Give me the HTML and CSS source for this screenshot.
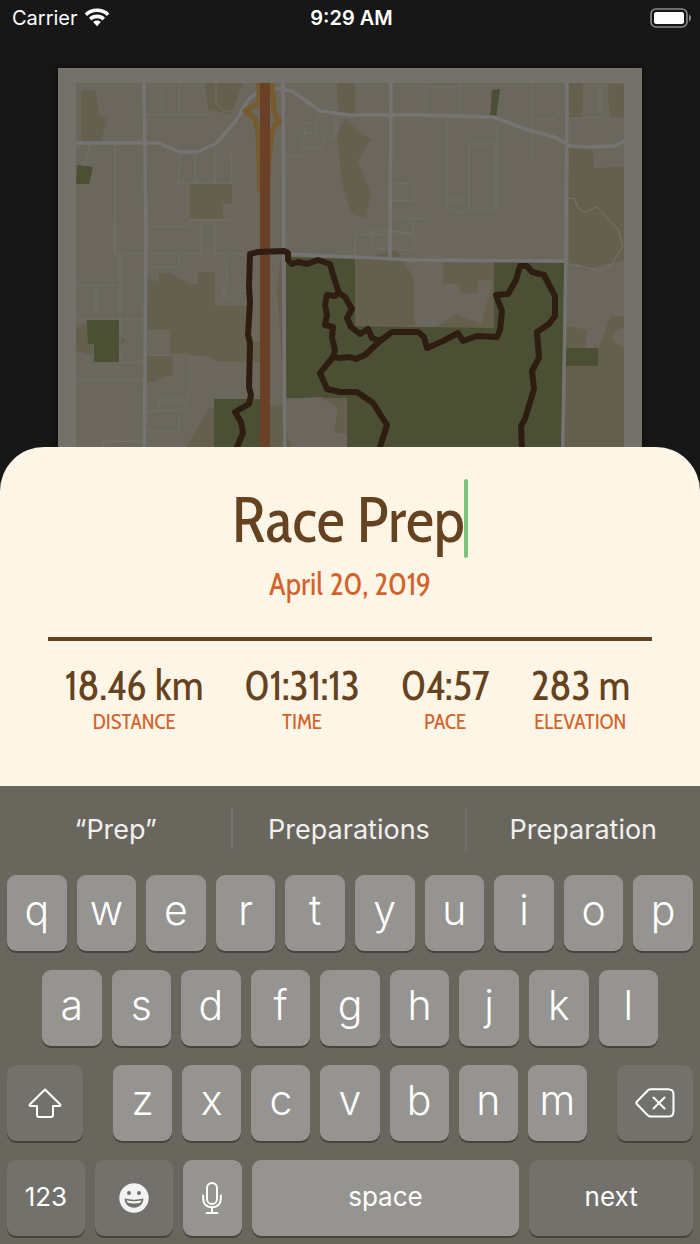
FILE: index.html
```html
<!DOCTYPE html>
<html lang="en">
<head>
  <meta charset="UTF-8" />
  <meta name="viewport" content="width=device-width, initial-scale=1.0" />
  <title>Race Prep</title>
  <link rel="stylesheet" href="styles.css">
</head>
<body>

  <header class="status-bar">
    <div class="carrier">
      <span>Carrier</span>
      <svg width="26" height="19" viewBox="0 0 26 19" aria-label="Wi-Fi">
        <path d="M13 0.400c4.800 0 9.200 1.800 12.400 5l-2.500 2.600C20.300 5.500 16.800 4.100 13 4.100S5.700 5.500 3.100 8L0.600 5.400C3.800 2.200 8.200 0.400 13 0.400z" fill="#fff"/>
        <path d="M13 6.600c3.100 0 5.900 1.200 8 3.200l-2.500 2.600c-1.500-1.400-3.400-2.200-5.500-2.200s-4 0.800-5.500 2.200L5 9.800c2.100-2 4.900-3.200 8-3.200z" fill="#fff"/>
        <path d="M13 12.600c1.500 0 2.800 0.500 3.800 1.500L13 18.200l-3.800-4.100c1-1 2.300-1.500 3.800-1.500z" fill="#fff"/>
      </svg>
    </div>
    <div class="time">9:29 AM</div>
    <div class="battery">
      <svg width="42" height="20" viewBox="0 0 42 20" aria-label="Battery full">
        <rect x="2" y="1" width="36" height="18" rx="5" fill="none" stroke="#8a8a8a" stroke-width="1.600"/>
        <rect x="5" y="4" width="30" height="12" rx="2.500" fill="#fff"/>
        <path d="M40 6.500c1.400 0.600 2 2 2 3.500s-0.600 2.900-2 3.500z" fill="#8a8a8a"/>
      </svg>
    </div>
  </header>

  <main>
    <div class="poster">
      <svg class="map" viewBox="76 83 548 408" role="img" aria-label="Route map">
        <rect x="76" y="83" width="548" height="408" fill="#6b675c"/>

        <!-- built-up areas -->
        <g fill="#655f4e">
          <path d="M81 91h15l3 24 9 2-7 24H81z"/>
          <path d="M205 83h38l-12 32-23-6z"/>
          <path d="M190 184h42v20h-9v15h-33z"/>
          <path d="M337 83h18v31h-17z"/>
          <path d="M344 119l7 5 20 16-13 20 13 35-5 23-15-4-9-32-5-47z"/>
          <path d="M569 83h14l-1 35h-13z"/>
          <path d="M609 84h15v33h-14l-2-20z"/>
          <path d="M569 148l24 2 1 18 30-1v93l-38 9-17-7z"/>
          <path d="M147 278l12 4v-9h12l17 11h10v-12h17v34h32v36h13v20h-40l-15-6h-35v-26h-23z"/>
          <path d="M147 356h26v20h-8l-11 6h-7z"/>
          <path d="M76 327l12-6 6 34-18-4zM119 335l8 6-8 5z"/>
          <path d="M186 447l22-37 8-5h70v86H176z"/>
          <path d="M281 258l-4 30 5 75 3 60-8 24h-1v44h60l-51-78z"/>
          <path d="M374 256l23-7 17 30v46l-59 1v-70z"/>
          <path d="M443 261h51v68h-60l21-15 26 10 12-43-15-1v13h-18v-9h-17z"/>
          <path d="M566 326l21 4-2 18 12 5 14-38 13 2v10l-11 6v9l11 5v144h-61z"/>
        </g>

        <!-- parks -->
        <g fill="#4b4f34">
          <path d="M77 165l16 2-4 17H76z"/>
          <path d="M492 90l8-1-4 29-6-1z"/>
          <path d="M87 320h32v42H94v-18h-6z"/>
          <path d="M214 399h49v92h-49z"/>
          <path d="M286 257l69 2v67l139 2v-66l70 1-3 228H347v-93H286z"/>
          <path d="M565 348h33v18h-33z"/>
        </g>
        <path d="M286 399l36-2 16 12-4 25 7 57h-35l-20-60z" fill="#6b675c"/>
        <path d="M322 398h25v36l-13-2 4-24z" fill="#655f4e"/>

        <!-- small streets -->
        <g fill="none" stroke="#72706a" stroke-width="1">
          <path d="M162 83v32M179 83v31M146 115l62-1M216 83v20l8 8h9M115 145v109M90 145l-6 20"/>
          <path d="M180 153l-2 30h54l-1-30-16 14M195 153v30M215 148v35M147 226h43v-6h42M201 220v33M215 220v33"/>
          <path d="M286 156h16v-20l3-3v-10h11v10h-11M302 148h20l4-12h10v-21M318 115v8"/>
          <path d="M426 87h35M426 83v31M461 83l-1 31M532 83v74M532 119h23l4-7h8M569 118h31V83"/>
          <path d="M447 119v91l8-1 5 4 9-4v-65h28v-20M469 209l27 1v-66M447 200h21"/>
          <path d="M392 183l22 1v17l-22-1M392 217l34 2M414 219l-1 15H355v22M372 230l42 3v17l-42-2z"/>
          <path d="M114 220v34h132M120 254v110M76 286l44-1M76 319h69M96 286v33M76 380h68M120 362h24"/>
          <path d="M147 267h32v-13M147 355h43v36l-5 18-38 3M159 411v-11h27M147 431h32v-19M103 447v-5l41-1M225 254l2 25-4 16 9 3 5-7h10"/>
          <path d="M567 198l8 1 3 9 7 4 12-5 21 22 5 17-12 19-12 6-22-6h-8" stroke="#77766c"/>
        </g>

        <!-- main roads -->
        <g fill="none" stroke="#757472" stroke-width="3.500" stroke-linejoin="round">
          <path d="M144 83l2 150-2 258M283 83l2 408M391 83l-1 175M567 83l-1 177-4 231"/>
          <path d="M76 143h82l22 9h17l18-8 20-22 14-23 13-10 12-1 18 3 28 20 30 4h68l75 2 29 11 35 10 13 8 18 1 27-1 11-6"/>
          <path d="M286 254l69 3 60 3 150 1"/>
        </g>

        <!-- highway with its ramps -->
        <g fill="none" stroke="#755b2d" stroke-width="5" stroke-linejoin="round">
          <path d="M259 83v20l-14 8 10 7 3 14 2 60M272 83l2 28 5 9-7 10-3 32-2 30M275 115l5 10"/>
        </g>
        <path d="M265 83v408" stroke="#6a4027" stroke-width="10"/>

        <!-- the run -->
        <g fill="none" stroke="#2e1e11" stroke-width="6" stroke-linejoin="round">
          <path d="M225 491l12-44 6-14-2-11-6-10 14-8 2-9-2-8 1-44-2-8 2-33-1-15 1-33 8-2 26-1 4 2v7l4 4 6-2 9 2 11-4 12 4 4 14 5 15 6 4 4 7 3 5-5 9 4 9 9 7 8-5 4 9 8 3 12-9h26l6 5 3 11 16-7 15-8 5 8 14-5 20 1 3-7 2-19-6-16 12-1 8-14 4-14h7l5 6 12 3 11 21v20l-6 8-12 8 2 26-7 13 2 18-9 30-4 7 1 22-2 44"/>
          <path d="M339 292l-4 4-8-1-2 10 2 10-2 10 8 2-1 11 3 12-2 7-13 16 7 16 13 3 17 0 16 11 14 22-7 22-9 44"/>
          <path d="M333 357l7 1 10-1 6 2 9-4 17-16"/>
        </g>
      </svg>
    </div>

    <section class="sheet">
      <div class="title-row">
        <input class="title" type="text" value="Race Prep" size="8" aria-label="Activity title">
        <span class="caret"></span>
      </div>
      <p class="date">April 20, 2019</p>
      <hr>
      <dl class="stats">
        <div><dd>18.46 km</dd><dt>DISTANCE</dt></div>
        <div><dd>01:31:13</dd><dt>TIME</dt></div>
        <div><dd>04:57</dd><dt>PACE</dt></div>
        <div><dd>283 m</dd><dt>ELEVATION</dt></div>
      </dl>
    </section>
  </main>

  <section class="keyboard" aria-label="Keyboard">
    <div class="suggestions">
      <button>“Prep”</button>
      <button>Preparations</button>
      <button>Preparation</button>
    </div>
    <div class="row">
      <button class="key">q</button>
      <button class="key">w</button>
      <button class="key">e</button>
      <button class="key">r</button>
      <button class="key">t</button>
      <button class="key">y</button>
      <button class="key">u</button>
      <button class="key">i</button>
      <button class="key">o</button>
      <button class="key">p</button>
    </div>
    <div class="row row-middle">
      <button class="key">a</button>
      <button class="key">s</button>
      <button class="key">d</button>
      <button class="key">f</button>
      <button class="key">g</button>
      <button class="key">h</button>
      <button class="key">j</button>
      <button class="key">k</button>
      <button class="key">l</button>
    </div>
    <div class="row">
      <button class="key dark shift" aria-label="Shift">
        <svg width="34" height="30" viewBox="0 0 34 30" fill="none" stroke="#fff" stroke-width="2" stroke-linejoin="round">
          <path d="M17 1.500L32 16.200c0.800 0.900 0.500 1.800-0.600 1.800H25v9c0 1.200-0.800 2-2 2H11c-1.200 0-2-0.800-2-2v-9H2.600c-1.100 0-1.400-0.900-0.600-1.800z"/>
        </svg>
      </button>
      <button class="key">z</button>
      <button class="key">x</button>
      <button class="key">c</button>
      <button class="key">v</button>
      <button class="key">b</button>
      <button class="key">n</button>
      <button class="key">m</button>
      <button class="key dark delete" aria-label="Delete">
        <svg width="40" height="30" viewBox="0 0 40 30" fill="none" stroke="#fff" stroke-width="2" stroke-linejoin="round" stroke-linecap="round">
          <path d="M15.500 1.200H33c3.300 0 5.500 2 5.500 5.200v17c0 3.200-2.200 5.200-5.500 5.200H15.500c-1 0-1.800-0.400-2.500-1L1.800 16c-0.700-0.700-0.700-1.500 0-2.200L13 2.200c0.700-0.600 1.500-1 2.500-1z"/>
          <path d="M18.500 9.500l11 11M29.500 9.500l-11 11"/>
        </svg>
      </button>
    </div>
    <div class="row row-bottom">
      <button class="key dark word">123</button>
      <button class="key dark" aria-label="Emoji">
        <svg width="30" height="30" viewBox="0 0 30 30">
          <circle cx="15" cy="15" r="14.700" fill="#f3f3f3"/>
          <circle cx="10" cy="10" r="2" fill="#73716b"/>
          <circle cx="20" cy="10" r="2" fill="#73716b"/>
          <path d="M5.500 15.500c6 1.500 13 1.500 19 0-0.300 5.700-4.300 9.200-9.500 9.200s-9.200-3.500-9.500-9.200z" fill="#73716b"/>
          <path d="M7.500 17.300c5 1.200 10 1.200 15 0l-1.200 2.500c-4.200 1-8.400 1-12.600 0z" fill="#f3f3f3"/>
        </svg>
      </button>
      <button class="key" aria-label="Dictate">
        <svg width="20" height="32" viewBox="0 0 20 32" fill="none" stroke="#fff" stroke-width="2" stroke-linecap="round">
          <rect x="5" y="1" width="10" height="21" rx="5"/>
          <path d="M1.200 13.500v3.500c0 5 3.500 8.300 8.800 8.300s8.800-3.300 8.800-8.300v-3.500M10 25.500V31M4.500 31h11"/>
        </svg>
      </button>
      <button class="key word">space</button>
      <button class="key dark word">next</button>
    </div>
  </section>

</body>
</html>
```
FILE: styles.css
```css
* {
  box-sizing: border-box;
}
body {
  margin: 0;
  background: #171717;
  font-family: Inter, "Liberation Sans", sans-serif;
  color: #fff;
}
button {
  border: none;
  padding: 0;
  background: none;
  color: inherit;
  font-family: inherit;
}

/* status bar */
.status-bar {
  display: grid;
  grid-template-columns: 1fr auto 1fr;
  align-items: center;
  height: 36px;
  padding: 0 9px 0 12px;
  font-size: 20px;
}
.carrier {
  display: flex;
  align-items: center;
  gap: 6px;
}
.carrier svg {
  margin-bottom: 2px;
}
.time {
  font-weight: 600;
}
.battery {
  display: flex;
  justify-content: flex-end;
}

/* map poster */
.poster {
  margin: 32px 58px 0;
  padding: 15px 18px 0;
  background: #74716a;
  box-shadow: 0 0 6px #0c0c0c;
}
.map {
  display: block;
  width: 100%;
  height: auto;
}

/* details sheet */
.sheet {
  position: relative;
  margin-top: -44px;
  padding: 32px 48px 50px;
  border-radius: 44px 44px 0 0;
  background: #fdf5e6;
  color: #654321;
  font-family: "Cabin Condensed", "Roboto Condensed", Lato, sans-serif;
  text-align: center;
}
.title-row {
  display: flex;
  justify-content: center;
  align-items: center;
}
.title {
  field-sizing: content;
  height: 79px;
  padding: 2px 0 0;
  border: none;
  outline: none;
  background: none;
  color: inherit;
  font-family: inherit;
  font-size: 63px;
  text-align: center;
}
.caret {
  width: 4px;
  height: 79px;
  border-radius: 2px;
  background: #78c67a;
}
.date {
  margin: 8px 0 0;
  color: #d4622c;
  font-size: 31px;
  line-height: 36px;
}
hr {
  height: 4px;
  margin: 35px 0 22px;
  border: none;
  background: #654321;
}
.stats {
  display: flex;
  justify-content: space-between;
  margin: 0;
  padding: 0 22px 0 17px;
}
.stats dd {
  margin: 0;
  font-size: 42px;
  line-height: 44px;
}
.stats dt {
  color: #d4622c;
  font-size: 21px;
  line-height: 29px;
}

/* keyboard */
.keyboard {
  padding: 0 7px 8px;
  background: #69665e;
}
.suggestions {
  display: grid;
  grid-template-columns: repeat(3, 1fr);
  align-items: center;
  height: 89px;
  margin: 0 -7px;
  padding-bottom: 3px;
}
.suggestions button {
  height: 42px;
  color: #f0f0ee;
  font-size: 27px;
}
.suggestions button:not(:last-child) {
  border-right: 2px solid #74726c;
}
.row {
  display: flex;
  gap: 10px;
  margin-bottom: 19px;
}
.row-middle {
  padding: 0 35px;
}
.row-bottom {
  display: grid;
  grid-template-columns: 78fr 78fr 59fr 268fr 164fr;
  margin-bottom: 0;
}
.key {
  display: flex;
  flex: 1 1 0;
  justify-content: center;
  align-items: center;
  min-width: 0;
  height: 76px;
  padding-bottom: 6px;
  border-radius: 9px;
  background: #959490;
  box-shadow: 0 2px 0 #45433e;
  font-size: 41px;
  font-weight: 300;
}
.key.dark {
  background: #73716b;
}
.key.word {
  padding-bottom: 4px;
  font-size: 26px;
  font-weight: 400;
}
.key:has(svg) {
  padding-bottom: 0;
}
.shift,
.delete {
  flex: 0 0 76px;
}
.shift {
  margin-right: 20px;
}
.delete {
  margin-left: 20px;
}
```
